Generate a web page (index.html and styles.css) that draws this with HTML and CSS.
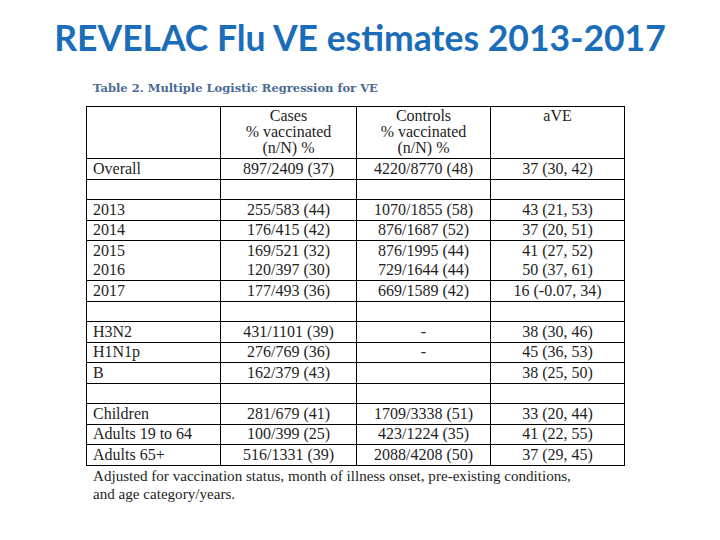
FILE: index.html
```html
<!DOCTYPE html>
<html>
<head>
<meta charset="utf-8">
<link rel="stylesheet" href="styles.css">
</head>
<body>
<h1 class="title">REVELAC Flu VE estimates 2013-2017</h1>
<div class="figure">
  <div class="caption">Table 2. Multiple Logistic Regression for VE</div>
  <table class="ve">
    <colgroup><col class="c1"><col class="c2"><col class="c3"><col class="c4"></colgroup>
    <tr class="head"><td></td><td>Cases<br>% vaccinated<br>(n/N) %</td><td>Controls<br>% vaccinated<br>(n/N) %</td><td>aVE</td></tr>
    <tr><td>Overall</td><td>897/2409 (37)</td><td>4220/8770 (48)</td><td>37 (30, 42)</td></tr>
    <tr class="blank"><td></td><td></td><td></td><td></td></tr>
    <tr><td>2013</td><td>255/583 (44)</td><td>1070/1855 (58)</td><td>43 (21, 53)</td></tr>
    <tr><td>2014</td><td>176/415 (42)</td><td>876/1687 (52)</td><td>37 (20, 51)</td></tr>
    <tr class="nobottom"><td>2015</td><td>169/521 (32)</td><td>876/1995 (44)</td><td>41 (27, 52)</td></tr>
    <tr class="notop"><td>2016</td><td>120/397 (30)</td><td>729/1644 (44)</td><td>50 (37, 61)</td></tr>
    <tr><td>2017</td><td>177/493 (36)</td><td>669/1589 (42)</td><td>16 (-0.07, 34)</td></tr>
    <tr class="blank"><td></td><td></td><td></td><td></td></tr>
    <tr><td>H3N2</td><td>431/1101 (39)</td><td>-</td><td>38 (30, 46)</td></tr>
    <tr><td>H1N1p</td><td>276/769 (36)</td><td>-</td><td>45 (36, 53)</td></tr>
    <tr><td>B</td><td>162/379 (43)</td><td></td><td>38 (25, 50)</td></tr>
    <tr class="blank"><td></td><td></td><td></td><td></td></tr>
    <tr><td>Children</td><td>281/679 (41)</td><td>1709/3338 (51)</td><td>33 (20, 44)</td></tr>
    <tr><td>Adults 19 to 64</td><td>100/399 (25)</td><td>423/1224 (35)</td><td>41 (22, 55)</td></tr>
    <tr><td>Adults 65+</td><td>516/1331 (39)</td><td>2088/4208 (50)</td><td>37 (29, 45)</td></tr>
  </table>
  <p class="note">Adjusted for vaccination status, month of illness onset, pre-existing conditions,<br>and age category/years.</p>
</div>
</body>
</html>
```
FILE: styles.css
```css
html, body {
  margin: 0;
  padding: 0;
  background: #ffffff;
}
body {
  width: 720px;
  height: 540px;
  overflow: hidden;
}
.title {
  margin: 0;
  padding-top: 17px;
  height: 46px;
  text-align: center;
  font-family: Lato, "Open Sans", sans-serif;
  font-weight: 700;
  font-size: 35.5px;
  line-height: 42px;
  color: #1a6db9;
  letter-spacing: 0;
}
.figure {
  padding-left: 86px;
  padding-top: 18px;
}
.caption {
  font-family: "DejaVu Serif", serif;
  font-weight: 700;
  font-size: 11.5px;
  line-height: 14px;
  color: #4a6a94;
  padding-left: 7px;
  height: 25px;
}
.ve {
  border-collapse: collapse;
  font-family: "Liberation Serif", serif;
  font-size: 16px;
  color: #1e1e1e;
  table-layout: fixed;
  width: 538px;
}
.c1 { width: 134px; }
.c2 { width: 136px; }
.c3 { width: 134px; }
.c4 { width: 134px; }
.ve td {
  border: 1px solid #000;
  padding: 0;
  height: 19.5px;
  line-height: 16px;
  text-align: center;
  vertical-align: middle;
  white-space: nowrap;
}
.ve td:first-child {
  text-align: left;
  padding-left: 6px;
}
.ve .head td {
  height: 50px;
  vertical-align: top;
  padding-top: 1px;
}
.ve .nobottom td {
  border-bottom-style: hidden;
}
.note {
  margin: 1px 0 0 0;
  padding-left: 7px;
  font-family: "Liberation Serif", serif;
  font-size: 15.1px;
  line-height: 18px;
  color: #1e1e1e;
}
```
